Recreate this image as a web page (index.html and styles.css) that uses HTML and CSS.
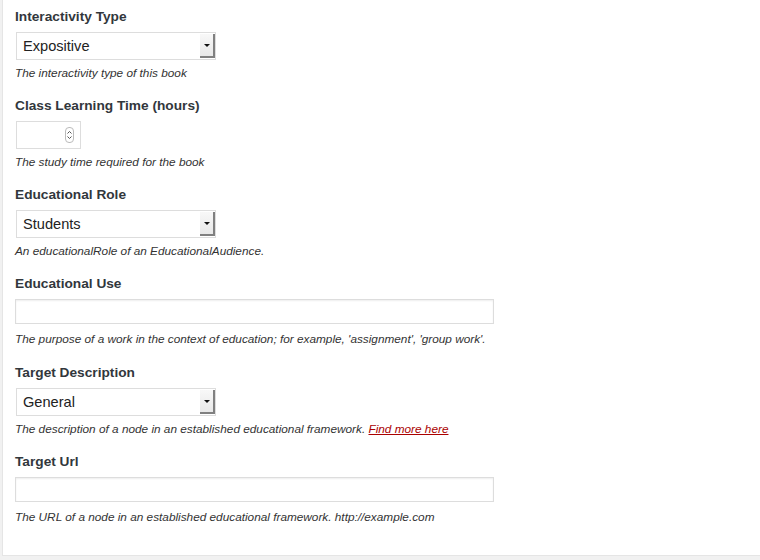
FILE: index.html
```html
<!DOCTYPE html>
<html lang="en">
<head>
<meta charset="utf-8">
<title>Educational metadata</title>
<link rel="stylesheet" href="styles.css">
</head>
<body>
<div class="panel">
  <div class="field">
    <div class="label">Interactivity Type</div>
    <div class="select"><span class="select-value">Expositive</span><span class="select-btn"><span class="arrow"></span></span></div>
    <div class="desc">The interactivity type of this book</div>
  </div>
  <div class="field">
    <div class="label">Class Learning Time (hours)</div>
    <div class="number"><span class="spin"><svg width="7" height="12" viewBox="0 0 7 12"><path d="M1.5 4.5 L3.5 2.5 L5.5 4.5 M1.5 7.5 L3.5 9.5 L5.5 7.5" fill="none" stroke="#555" stroke-width="1"/></svg></span></div>
    <div class="desc">The study time required for the book</div>
  </div>
  <div class="field">
    <div class="label">Educational Role</div>
    <div class="select"><span class="select-value">Students</span><span class="select-btn"><span class="arrow"></span></span></div>
    <div class="desc">An educationalRole of an EducationalAudience.</div>
  </div>
  <div class="field field-text">
    <div class="label">Educational Use</div>
    <div class="text-input"></div>
    <div class="desc desc-text">The purpose of a work in the context of education; for example, 'assignment', 'group work'.</div>
  </div>
  <div class="field">
    <div class="label">Target Description</div>
    <div class="select"><span class="select-value">General</span><span class="select-btn"><span class="arrow"></span></span></div>
    <div class="desc">The description of a node in an established educational framework. <a class="link" href="#">Find more here</a></div>
  </div>
  <div class="field field-text">
    <div class="label">Target Url</div>
    <div class="text-input"></div>
    <div class="desc desc-text">The URL of a node in an established educational framework. http://example.com</div>
  </div>
</div>
</body>
</html>
```
FILE: styles.css
```css
html, body {
  margin: 0;
  padding: 0;
  background: #f1f1f1;
}
body {
  font-family: "Liberation Sans", Arial, sans-serif;
  color: #23282d;
}
.panel {
  margin-left: 2px;
  height: 556px;
  box-sizing: border-box;
  background: #fff;
  border-left: 1px solid #e5e5e5;
  border-bottom: 1px solid #e5e5e5;
  padding: 8px 0 0 12px;
}
.field {
  margin-bottom: 16px;
}
.field-text {
  margin-bottom: 17px;
}
.label {
  font-size: 13.7px;
  font-weight: bold;
  line-height: 18px;
  color: #32373c;
  margin-bottom: 6px;
}
.select {
  width: 200px;
  height: 28px;
  box-sizing: border-box;
  margin-left: 1px;
  border: 1px solid #ddd;
  background: #fff;
  display: flex;
  align-items: stretch;
}
.select-value {
  flex: 1;
  font-size: 14.6px;
  line-height: 26px;
  padding-left: 6px;
  color: #222;
}
.select-btn {
  width: 15px;
  margin: 1px 0 1px 0;
  box-sizing: border-box;
  background: linear-gradient(#f8f8f8, #e8e8e8);
  border-right: 2px solid #808080;
  border-bottom: 2px solid #808080;
  display: flex;
  align-items: center;
  justify-content: center;
}
.arrow {
  width: 0;
  height: 0;
  border-left: 3px solid transparent;
  border-right: 3px solid transparent;
  border-top: 3px solid #111;
  margin-top: 1px;
}
.number {
  width: 65px;
  height: 28px;
  box-sizing: border-box;
  margin-left: 1px;
  border: 1px solid #ddd;
  background: #fff;
  display: flex;
  align-items: center;
  justify-content: flex-end;
  padding-right: 6px;
}
.spin {
  width: 7px;
  height: 14px;
  border: 1px solid #bbb;
  border-radius: 4px;
  display: flex;
  align-items: center;
  justify-content: center;
  box-sizing: content-box;
}
.spin svg {
  display: block;
}
.text-input {
  width: 479px;
  height: 25px;
  box-sizing: border-box;
  border: 1px solid #ddd;
  background: #fff;
  box-shadow: inset 0 1px 2px rgba(0, 0, 0, 0.07);
  margin-top: 2px;
}
.desc {
  font-size: 11.8px;
  font-style: italic;
  line-height: 16px;
  color: #333;
  margin-top: 5px;
}
.desc-text {
  margin-top: 7px;
}
.link {
  color: #a00;
  text-decoration: underline;
}
```
